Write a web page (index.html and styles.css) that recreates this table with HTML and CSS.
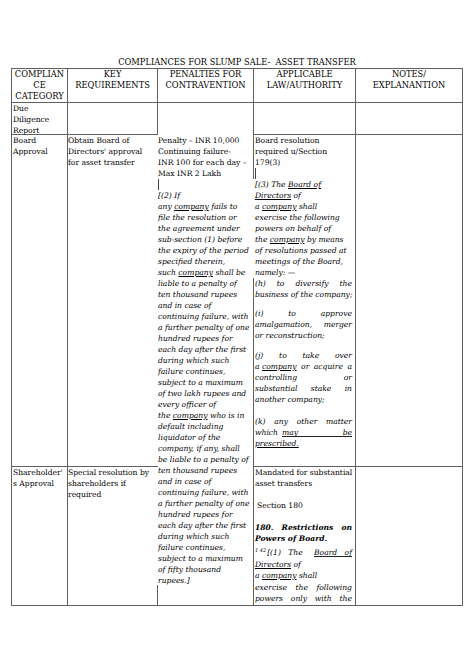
FILE: index.html
```html
<!DOCTYPE html>
<html lang="en">
<head>
<meta charset="utf-8">
<title>Compliances for Slump Sale - Asset Transfer</title>
<link rel="stylesheet" href="styles.css">
</head>
<body>
<div class="page">
  <div class="title">COMPLIANCES FOR SLUMP SALE-  ASSET TRANSFER</div>
  <div class="grid">
    <div class="cell h">COMPLIAN<br>CE<br>CATEGORY</div>
    <div class="cell h">KEY<br>REQUIREMENTS</div>
    <div class="cell h">PENALTIES FOR<br>CONTRAVENTION</div>
    <div class="cell h">APPLICABLE<br>LAW/AUTHORITY</div>
    <div class="cell h">NOTES/<br>EXPLANANTION</div>

    <div class="cell">Due<br>Diligence<br>Report</div>
    <div class="cell"></div>
    <div class="cell pen">
      <div>Penalty – INR 10,000<br>Continuing failure-<br>INR 100 for each day –<br>Max INR 2 Lakh</div>
      <div class="cur-line"><span class="cursor"></span></div>
      <div class="it">[(2) If<br>any <u>company</u> fails to<br>file the resolution or<br>the agreement under<br>sub-section (1) before<br>the expiry of the period<br>specified therein,<br>such <u>company</u> shall be<br>liable to a penalty of<br>ten thousand rupees<br>and in case of<br>continuing failure, with<br>a further penalty of one<br>hundred rupees for<br>each day after the first<br>during which such<br>failure continues,<br>subject to a maximum<br>of two lakh rupees and<br>every officer of<br>the <u>company</u> who is in<br>default including<br>liquidator of the<br>company, if any, shall<br>be liable to a penalty of<br>ten thousand rupees<br>and in case of<br>continuing failure, with<br>a further penalty of one<br>hundred rupees for<br>each day after the first<br>during which such<br>failure continues,<br>subject to a maximum<br>of fifty thousand<br>rupees.]</div>
    </div>
    <div class="cell"></div>
    <div class="cell"></div>

    <div class="cell">Board<br>Approval</div>
    <div class="cell nr">Obtain Board of<br>Directors' approval<br>for asset transfer</div>
    <div class="cell law">
      <div>Board resolution<br>required u/Section<br>179(3)</div>
      <div class="cur-line"><span class="cursor"></span></div>
      <div class="it ov">[(3) The <u>Board of</u><br><u>Directors</u> of<br>a <u>company</u> shall<br>exercise the following<br>powers on behalf of<br>the <u>company</u> by means<br>of resolutions passed at<br>meetings of the Board,<br>namely: —</div>
      <div class="it">
        <span class="j"><span>(h)</span><span>to</span><span>diversify</span><span>the</span></span>
        business of the company;
      </div>
      <div class="it para">
        <span class="j"><span>(i)</span><span>to</span><span>approve</span></span>
        <span class="j"><span>amalgamation,</span><span>merger</span></span>
        or reconstruction;
      </div>
      <div class="it para p2">
        <span class="j"><span>(j)</span><span>to</span><span>take</span><span>over</span></span>
        <span class="j"><span>a <u>company</u></span><span>or</span><span>acquire</span><span>a</span></span>
        <span class="j"><span>controlling</span><span>or</span></span>
        <span class="j"><span>substantial</span><span>stake</span><span>in</span></span>
        another company;
      </div>
      <div class="it para p3">
        <span class="j"><span>(k)</span><span>any</span><span>other</span><span>matter</span></span>
        <span class="j"><span>which</span><span class="ulrun"><span>may</span><span>be</span></span></span>
        <u>prescribed.</u>
      </div>
    </div>
    <div class="cell"></div>

    <div class="cell">Shareholder'<br>s Approval</div>
    <div class="cell nr">Special resolution by<br>shareholders if<br>required</div>
    <div class="cell law clip">
      <div>Mandated for substantial<br>asset transfers</div>
      <div class="gap sect">Section 180</div>
      <div class="gap bi">
        <span class="j"><span>180.</span><span>Restrictions</span><span>on</span></span>
        Powers of Board.
      </div>
      <div class="it sec">
        <span class="j"><span><sup>1 42</sup>[(1)</span><span>The</span><span class="ulrun short"><span>Board</span><span>of</span></span></span>
        <u>Directors</u> of<br>
        a <u>company</u> shall<br>
        <span class="j"><span>exercise</span><span>the</span><span>following</span></span>
        <span class="j"><span>powers</span><span>only</span><span>with</span><span>the</span></span>
      </div>
    </div>
    <div class="cell"></div>
  </div>
</div>
</body>
</html>
```

FILE: styles.css
```css
* {
  box-sizing: border-box;
}

html,
body {
  margin: 0;
  background: #ffffff;
}

body {
  font-family: "DejaVu Serif", "Liberation Serif", serif;
  font-size: 7.6px;
  line-height: 11px;
  color: #000000;
}

.page {
  padding-top: 56px;
}

.title {
  margin-left: 11px;
  width: 452px;
  height: 12px;
  text-align: center;
  font-size: 8.3px;
  line-height: 12px;
  white-space: pre;
}

.grid {
  margin-left: 11px;
  width: 452px;
  display: grid;
  grid-template-columns: 56px 90px 96px 102px 107px;
  grid-template-rows: 34px 32px 332px 139px;
  border-left: 1px solid #5f5f5f;
  border-top: 1px solid #5f5f5f;
}

.cell {
  border-right: 1px solid #5f5f5f;
  border-bottom: 1px solid #5f5f5f;
  padding: 0 1px;
  white-space: nowrap;
}

.h {
  text-align: center;
  font-size: 8.3px;
  line-height: 11px;
}

.nr {
  border-right: none;
  padding-left: 0;
}

.pen {
  grid-column: 3;
  grid-row: 2 / span 3;
  padding-top: 32px;
  padding-left: 0;
  position: relative;
}

.pen::before {
  content: "";
  position: absolute;
  left: -1px;
  bottom: -1px;
  width: 1px;
  height: 21px;
  background: #5f5f5f;
}

.law {
  padding: 0 3px 0 1px;
}

.clip {
  overflow: hidden;
}

.it {
  font-style: italic;
}

.bi {
  font-style: italic;
  font-weight: bold;
}

.cur-line {
  height: 11px;
}

.cursor {
  display: inline-block;
  width: 1px;
  height: 11px;
  background: #444444;
  vertical-align: top;
}

.ov {
  position: relative;
  margin-left: -2px;
  padding-left: 2px;
  background: #ffffff;
}

.para {
  margin-top: 8px;
}

.p2 {
  margin-top: 9px;
}

.p3 {
  margin-top: 11px;
}

.j {
  display: flex;
  justify-content: space-between;
}

.ulrun {
  flex: 1;
  display: flex;
  justify-content: space-between;
  margin-left: 4px;
  background: linear-gradient(#222222, #222222) 0 9px / 100% 1px no-repeat;
}

.ulrun.short {
  flex: 0 0 auto;
  width: 38px;
}

u {
  text-decoration: underline;
  text-decoration-thickness: 1px;
  text-underline-offset: 1px;
}

.gap {
  margin-top: 11px;
}

.sect {
  padding-left: 2px;
}

.sec {
  margin-top: 3px;
  line-height: 11.5px;
}

sup {
  font-size: 5px;
  line-height: 0;
  vertical-align: 3px;
  margin-right: 1px;
}
```
